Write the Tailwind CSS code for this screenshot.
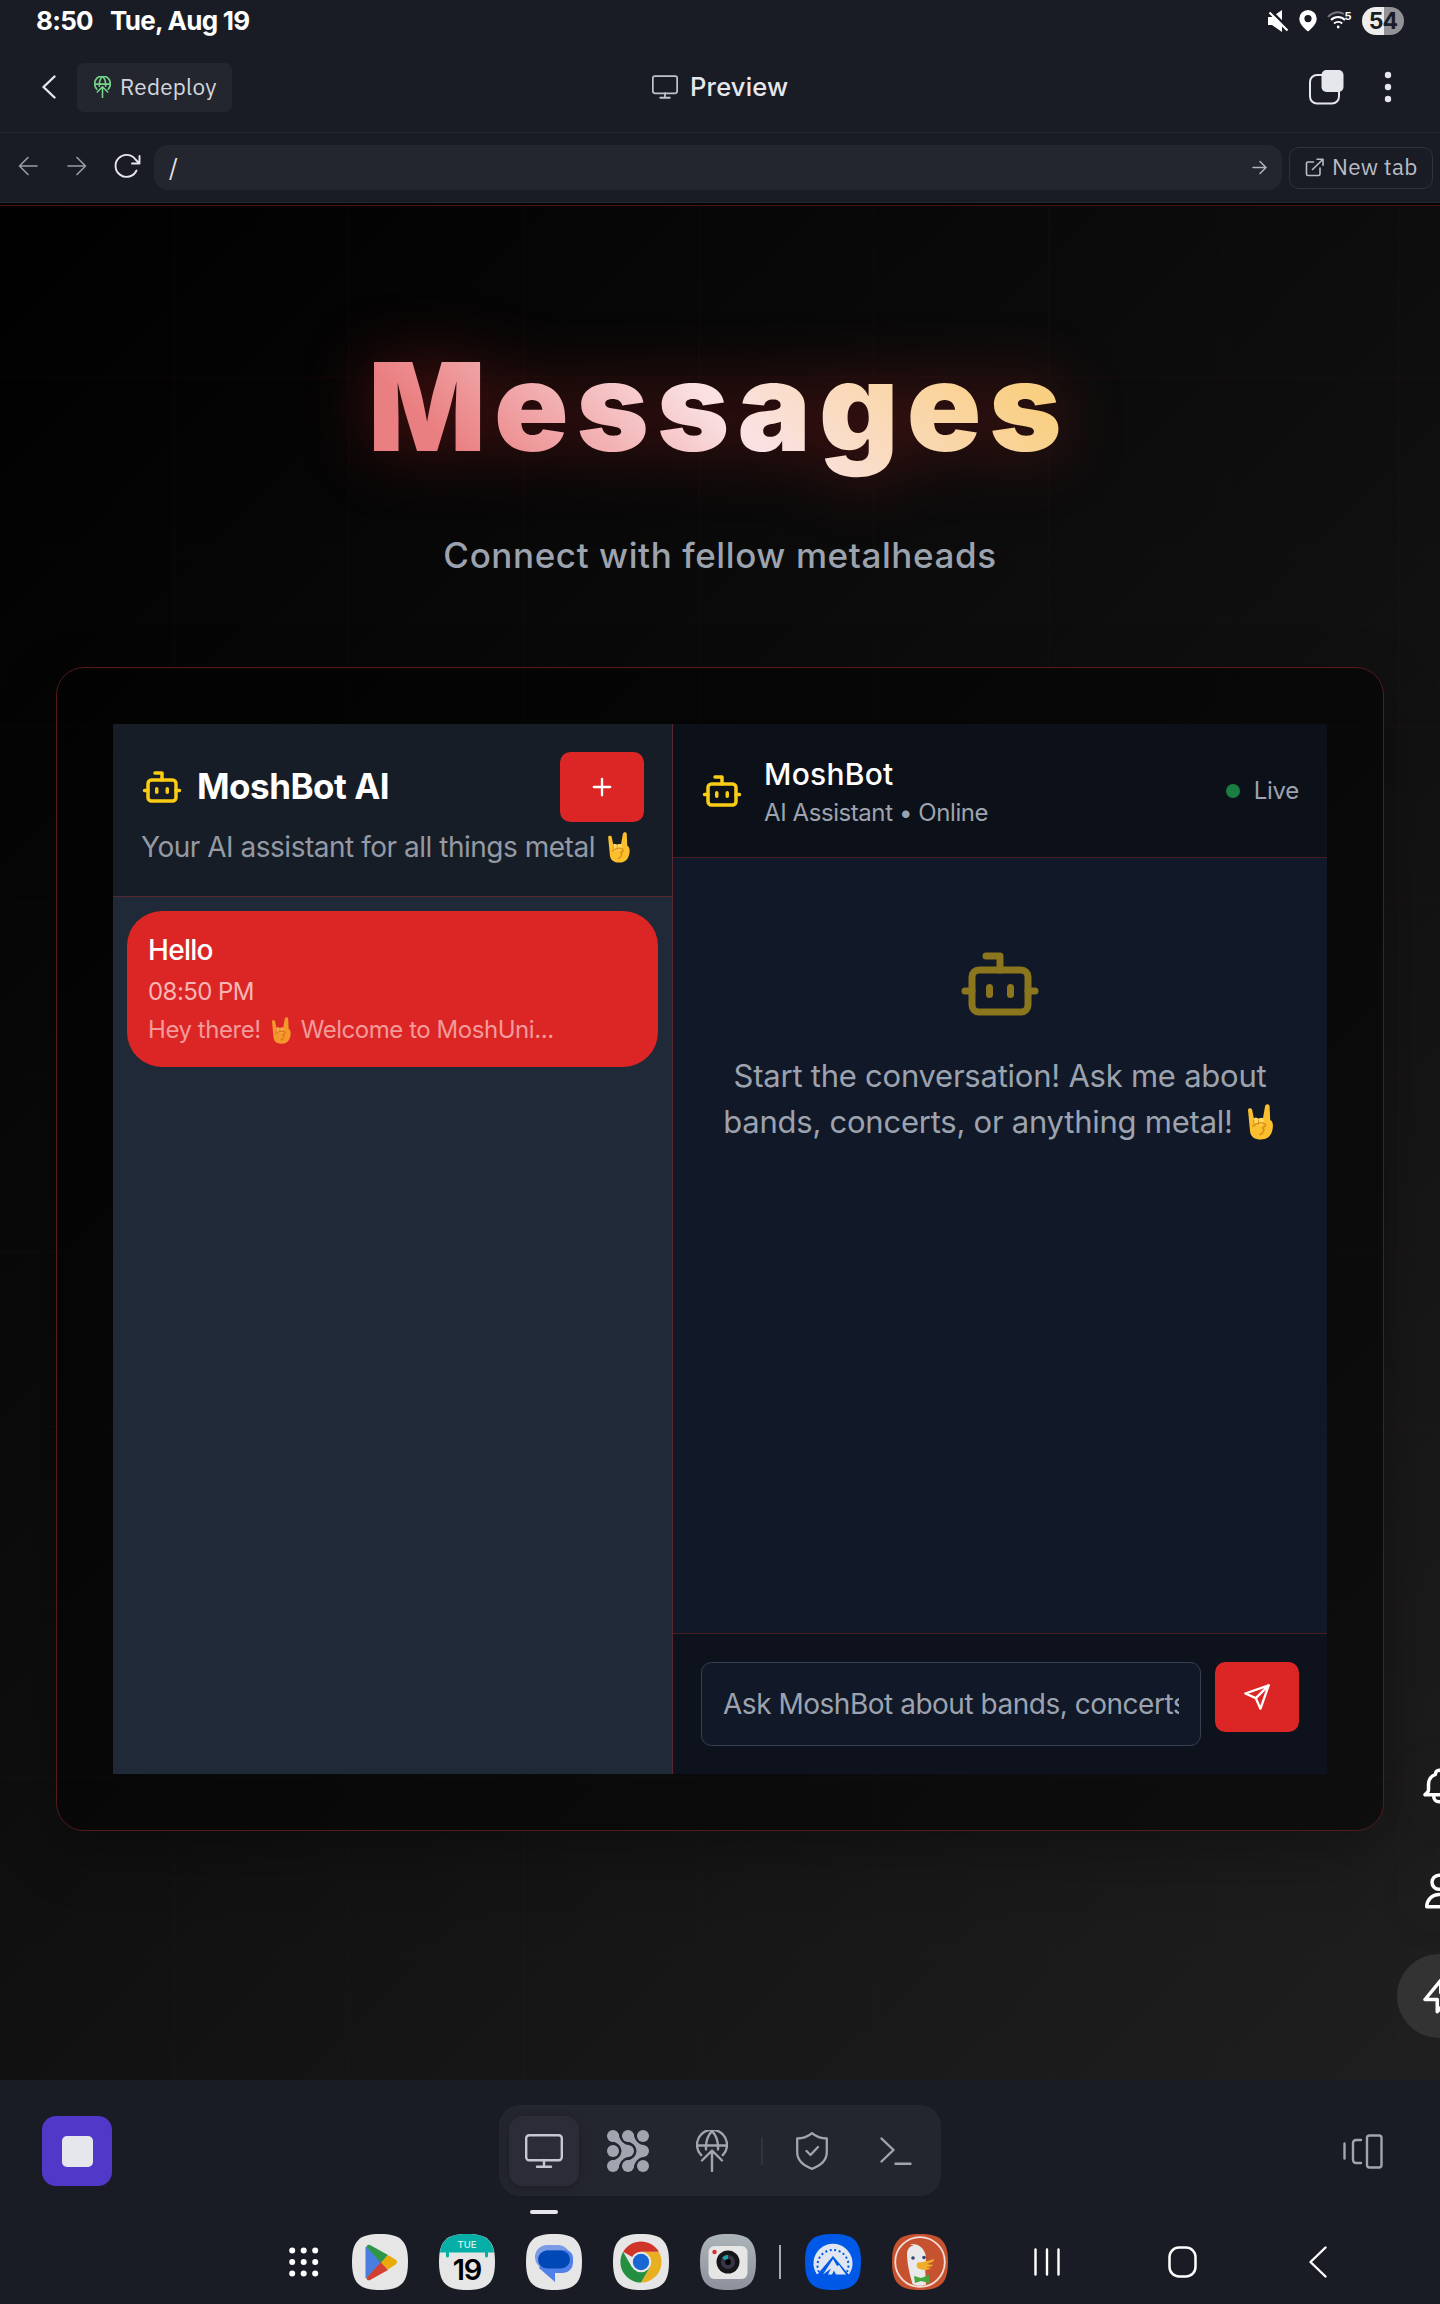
<!DOCTYPE html>
<html lang="en">
<head>
<meta charset="utf-8">
<title>Preview</title>
<script src="https://cdn.jsdelivr.net/npm/@tailwindcss/browser@4"></script>
</head>
<body class="bg-[#1a1c25]">
<svg class="hidden">
  <symbol id="bot" viewBox="0 0 24 24" fill="none" stroke="currentColor" stroke-width="2" stroke-linecap="round" stroke-linejoin="round"><path d="M12 8V4H8"/><rect x="4" y="8" width="16" height="12" rx="2"/><path d="M2 14h2M20 14h2M15 13v2M9 13v2"/></symbol>
  <symbol id="monitor" viewBox="0 0 38 34" fill="none" stroke="currentColor" stroke-linecap="round" stroke-linejoin="round"><rect x="1.200" y="1.200" width="35.600" height="25" rx="3"/><path d="M19 26v6M12 32.700h14"/></symbol>
  <symbol id="deploy" viewBox="0 0 32 42" fill="none" stroke="currentColor" stroke-linecap="round" stroke-linejoin="round"><path d="M5.2 25.2A15 15 0 1 1 26.8 25.2M1.5 15.5h29M10 19.500C9.500 11 12.500 4 16 1.200C19.500 4 22.500 11 22 19.500M16 41V21M6 30.500l10-10 10 10"/></symbol>
  <symbol id="horns" viewBox="0 0 26 36"><path d="M1 6c0-2 3.600-2.400 4.200 0L7 15l9-1 2-11.500c.4-3 4.600-3 4.600 0l.6 13.500c2.600 1 3.200 5 2.400 9-1.200 7-5 10.500-11.500 10.500S3.500 33 3 27Z" fill="#fcbf2d"/><path d="M6.500 16c0-3 4-3.500 5 0 1-3 5-3 5.500 1l-2 4-7 1Z" fill="#ffd75c"/><path d="M6 22c4-3 9-4 12-2 1.500 1.500-.5 3.500-3 3.500 3 1 2 5.500-2 7" fill="none" stroke="#dc8f17" stroke-width="1.600" stroke-linecap="round"/><path d="M11.500 16v5M6.800 16v4" stroke="#dc8f17" stroke-width="1"/></symbol>
</svg>
<div class="w-[1440px] h-[2304px] flex flex-col overflow-hidden font-['Inter',sans-serif] text-[#e6e7ed]">

  <!-- status bar -->
  <div class="h-[42px] flex items-center pl-[36px] pr-[36px] text-white">
    <span class="text-[26px] font-bold leading-[42px] w-[74px] tracking-[-0.7px]">8:50</span>
    <span class="text-[26px] font-bold leading-[42px] tracking-[-0.72px]">Tue, Aug 19</span>
    <svg class="ml-auto w-[20px] h-[22px]" viewBox="0 0 20 22"><path d="M0 7h4l10-7v22L4 15H0Z" fill="#fff"/><path d="M3 1l18 18" stroke="#1a1c25" stroke-width="2.500"/><path d="M1.500 2.500l18 18" stroke="#fff" stroke-width="2.200"/></svg>
    <svg class="ml-[11px] w-[18px] h-[22px]" viewBox="0 0 18 22"><path fill="#fff" fill-rule="evenodd" d="M9 0a8.700 8.700 0 0 1 8.700 8.700C17.700 14 12 19 9 21.500 6 19 .3 14 .3 8.700A8.700 8.700 0 0 1 9 0Zm0 5a3.600 3.600 0 1 0 0 7.200A3.600 3.600 0 0 0 9 5Z"/></svg>
    <svg class="ml-[10px] w-[26px] h-[22px]" viewBox="0 0 26 22" fill="none" stroke="#fff" stroke-width="1.900"><path d="M1 7C5 2 12 1 17 4" opacity=".4"/><path d="M4 10c4-4 10-4 14 0M7 13.500c2.400-2.200 6-2.200 8.200 0"/><circle cx="11.200" cy="17" r="1.400" fill="#fff" stroke="none"/><text x="17.500" y="9.500" font-size="11" font-weight="700" fill="#fff" stroke="none">5</text></svg>
    <div class="ml-[9px] w-[42px] h-[28px] rounded-full bg-linear-to-r from-[#ededed] from-52% to-[#929297] to-52% text-[#1a1c25] text-[23px] leading-[28px] font-bold text-center tracking-[-0.8px]">54</div>
  </div>

  <!-- app header -->
  <div class="h-[91px] flex items-center border-b border-[#252833] relative">
    <svg class="ml-[42px] w-[14px] h-[24px]" viewBox="0 0 14 24" fill="none" stroke="#e6e7ed" stroke-width="2.400" stroke-linecap="round" stroke-linejoin="round"><path d="M12.500 1.500L1.500 12l11 10.500"/></svg>
    <div class="ml-[21px] w-[155px] h-[49px] rounded-[7px] bg-[#24262f] flex items-center pl-[17px]">
      <svg class="w-[17px] h-[22px] text-[#76d68c] [stroke-width:3]"><use href="#deploy"/></svg>
      <span class="ml-[9px] font-['IBM_Plex_Sans','Noto_Sans',sans-serif] text-[22.500px] tracking-[0.25px] text-[#d4d6de] leading-[30px]">Redeploy</span>
    </div>
    <div class="absolute left-[652px] top-[24px] flex items-center h-[42px]">
      <svg class="w-[26px] h-[24px] text-[#c0c3cc] [stroke-width:2.600]"><use href="#monitor"/></svg>
      <span class="ml-[12px] text-[25.500px] font-medium tracking-[0.2px] leading-[36px]">Preview</span>
    </div>
    <svg class="ml-auto mb-[1px] w-[36px] h-[36px]" viewBox="0 0 36 36"><rect x="2" y="6" width="29" height="28.500" rx="7" fill="none" stroke="#e6e7ed" stroke-width="2"/><rect x="13.500" y="1" width="22" height="22" rx="5" fill="#e6e7ed"/></svg>
    <svg class="ml-[40px] mr-[48px] w-[8px] h-[32px]" viewBox="0 0 8 32" fill="#e6e7ed"><circle cx="4" cy="4" r="3.200"/><circle cx="4" cy="16" r="3.200"/><circle cx="4" cy="28" r="3.200"/></svg>
  </div>

  <!-- address bar -->
  <div class="h-[70px] flex items-center border-b border-[#252833]">
    <svg class="ml-[18px] mb-[3px] w-[20px] h-[20px]" viewBox="0 0 20 20" fill="none" stroke="#9a9ca6" stroke-width="1.600" stroke-linecap="round" stroke-linejoin="round"><path d="M19 10H1.500M10 1.500L1.500 10l8.500 8.500"/></svg>
    <svg class="ml-[29px] mb-[3px] w-[20px] h-[20px]" viewBox="0 0 20 20" fill="none" stroke="#9a9ca6" stroke-width="1.600" stroke-linecap="round" stroke-linejoin="round"><path d="M1 10h17.500M10 1.500l8.500 8.500-8.500 8.500"/></svg>
    <svg class="ml-[27px] mb-[3px] w-[28px] h-[26px]" viewBox="0 0 28 26" fill="none" stroke="#e6e7ed" stroke-width="1.900" stroke-linecap="round" stroke-linejoin="round"><path d="M22.500 17.500A11 11 0 1 1 21.500 6.500L25 10M25.500 3v7.500H18"/></svg>
    <div class="ml-[12px] w-[1128px] h-[45px] rounded-[14px] bg-[#24262f] flex items-center pl-[15px] pr-[15px] text-[24px]">
      <span class="font-['IBM_Plex_Sans','Noto_Sans',sans-serif] pb-[2px]">/</span>
      <svg class="ml-auto w-[15px] h-[15px]" viewBox="0 0 15 15" fill="none" stroke="#b0b3bd" stroke-width="1.500" stroke-linecap="round" stroke-linejoin="round"><path d="M1 7.500h13M8 1.500l6 6-6 6"/></svg>
    </div>
    <div class="ml-[7px] w-[144px] h-[42px] rounded-[10px] border border-[#30323e] flex items-center pl-[15px] text-[#b9bcc5]">
      <svg class="w-[19px] h-[19px]" viewBox="0 0 19 19" fill="none" stroke="#b9bcc5" stroke-width="1.600" stroke-linecap="round" stroke-linejoin="round"><path d="M8.500 4H3a1.500 1.500 0 0 0-1.500 1.500V16A1.500 1.500 0 0 0 3 17.500h10.500A1.500 1.500 0 0 0 15 16v-6M12 1.200h6v6M17.500 1.700L7.500 11.500"/></svg>
      <span class="ml-[8px] mb-[1px] font-['IBM_Plex_Sans','Noto_Sans',sans-serif] text-[22.500px] tracking-[0.25px] leading-[30px] whitespace-nowrap">New tab</span>
    </div>
  </div>

  <!-- previewed page -->
  <div class="h-[1877px] shrink-0 relative overflow-hidden bg-[linear-gradient(135deg,#000_0%,#0f0f0f_50%,#1f1f1f_100%)]">
    <div class="absolute inset-0 bg-[repeating-linear-gradient(90deg,transparent_0_173px,rgba(220,38,38,0.025)_173px_175px),repeating-linear-gradient(180deg,transparent_0_173px,rgba(220,38,38,0.025)_173px_175px)]"></div>
    <div class="relative h-full flex flex-col items-center">
      <div class="w-full h-[3px] bg-black border-b border-[#4a1414]"></div>
      <div class="mt-[126px] mr-[2px] drop-shadow-[0_0_34px_rgba(220,38,38,0.36)]">
        <h1 class="text-[123px] leading-[150px] font-black tracking-[8.100px] bg-[linear-gradient(45deg,#ea7f81_14%,#fae2e4_50%,#f9cf82_88%)] bg-clip-text text-transparent">Messages</h1>
      </div>
      <p class="mt-[48px] text-[35px] leading-[50px] font-medium tracking-[0.600px] text-[#9ca3af]">Connect with fellow metalheads</p>

      <div class="mt-[87px] w-[1328px] h-[1164px] rounded-[28px] border border-[#541b1b] bg-black/50 p-[56px] shadow-[0_20px_60px_rgba(0,0,0,0.3)]">
        <div class="w-[1214px] h-[1050px] flex">
          <!-- conversations -->
          <div class="w-[560px] shrink-0 bg-[#202937] border-r border-[#5a2832] flex flex-col">
            <div class="h-[173px] bg-[#171d26] border-b border-[#5a2832] px-[28px] pt-[28px]">
              <div class="flex items-center h-[70px]">
                <svg class="w-[42px] h-[42px] text-[#facc15]"><use href="#bot"/></svg>
                <h2 class="ml-[14px] mb-[2px] text-[35px] font-bold leading-[49px] tracking-[-0.500px] text-white">MoshBot AI</h2>
                <div class="ml-auto w-[84px] h-[70px] rounded-[10.500px] bg-[#dc2626] flex items-center justify-center">
                  <svg class="w-[28px] h-[28px]" viewBox="0 0 24 24" fill="none" stroke="#fff" stroke-width="2" stroke-linecap="round"><path d="M5 12h14M12 5v14"/></svg>
                </div>
              </div>
              <p class="mt-[4px] text-[28px] leading-[42px] tracking-[-0.480px] text-[#949aa5] flex items-center whitespace-nowrap">Your AI assistant for all things metal<svg class="ml-[12px] w-[23px] h-[31px] shrink-0"><use href="#horns"/></svg></p>
            </div>
            <div class="mt-[14px] ml-[14px] w-[531px] h-[156px] rounded-[35px] bg-[#dc2626] px-[21px] pt-[18px]">
              <p class="text-[28px] leading-[43px] font-medium tracking-[-0.700px] text-white">Hello</p>
              <p class="text-[24px] leading-[40px] tracking-[-0.550px] text-[#f7b5b5]">08:50 PM</p>
              <p class="text-[24px] leading-[36px] tracking-[-0.450px] text-[#f39a9a] flex items-center whitespace-nowrap">Hey there!<svg class="mx-[10px] w-[20px] h-[27px] opacity-75"><use href="#horns"/></svg>Welcome to MoshUni...</p>
            </div>
          </div>
          <!-- chat -->
          <div class="w-[654px] bg-[#111827] flex flex-col">
            <div class="h-[134px] bg-[#0c1019] border-b border-[#4a1c24] flex items-center px-[28px]">
              <svg class="w-[42px] h-[42px] text-[#facc15]"><use href="#bot"/></svg>
              <div class="ml-[21px] mt-[2px]">
                <h3 class="text-[30px] leading-[42px] font-medium tracking-[0.250px] text-white">MoshBot</h3>
                <p class="text-[24px] leading-[35px] tracking-[-0.420px] text-[#9ca3af]">AI Assistant • Online</p>
              </div>
              <span class="ml-auto w-[14px] h-[14px] rounded-full bg-[#1a7d41]"></span>
              <span class="ml-[14px] text-[24px] leading-[35px] tracking-[-0.300px] text-[#9ca3af]">Live</span>
            </div>
            <div class="flex-1 flex flex-col items-center pt-[84px] text-[#9ca3af] text-[31px] leading-[46px] tracking-[-0.240px]">
              <svg class="w-[84px] h-[84px] text-[#8b751d]"><use href="#bot"/></svg>
              <p class="mt-[27px] whitespace-nowrap">Start the conversation! Ask me about</p>
              <p class="flex items-center whitespace-nowrap mr-[4px]">bands, concerts, or anything metal!<svg class="ml-[14px] w-[26px] h-[36px]"><use href="#horns"/></svg></p>
            </div>
            <div class="h-[141px] bg-[#0e121c] border-t border-[#4a1c24] px-[28px] pt-[28px] flex items-start justify-between">
              <div class="w-[500px] h-[84px] rounded-[10.500px] border border-[#374151] bg-[#111827] px-[21px]"><div class="overflow-hidden whitespace-nowrap text-[28px] leading-[82px] tracking-[-0.480px] text-[#9ca3af]">Ask MoshBot about bands, concerts</div></div>
              <div class="w-[84px] h-[70px] rounded-[10.500px] bg-[#dc2626] flex items-center justify-center">
                <svg class="w-[28px] h-[28px]" viewBox="0 0 24 24" fill="none" stroke="#fff" stroke-width="2" stroke-linecap="round" stroke-linejoin="round"><path d="m22 2-7 20-4-9-9-4Z"/><path d="M22 2 11 13"/></svg>
              </div>
            </div>
          </div>
        </div>
      </div>
    </div>
    <!-- floating actions, cut by the screen edge -->
    <div class="absolute left-[1397px] top-[1541px] w-[84px] flex flex-col gap-[21px] text-white">
      <div class="h-[84px] flex items-center justify-center rounded-full shadow-[0_7px_20px_rgba(0,0,0,0.06)]"><svg class="w-[42px] h-[42px]" viewBox="0 0 24 24" fill="none" stroke="currentColor" stroke-width="2" stroke-linecap="round" stroke-linejoin="round"><path d="M15 17h5l-1.405-1.405A2.032 2.032 0 0118 14.158V11a6.002 6.002 0 00-4-5.659V5a2 2 0 10-4 0v.341C7.67 6.165 6 8.388 6 11v3.159c0 .538-.214 1.055-.595 1.436L4 17h5m6 0v1a3 3 0 11-6 0v-1m6 0H9"/></svg></div>
      <div class="h-[84px] flex items-center justify-center rounded-full shadow-[0_7px_20px_rgba(0,0,0,0.06)]"><svg class="w-[42px] h-[42px]" viewBox="0 0 24 24" fill="none" stroke="currentColor" stroke-width="2" stroke-linecap="round" stroke-linejoin="round"><path d="M16 7a4 4 0 11-8 0 4 4 0 018 0zM12 14a7 7 0 00-7 7h14a7 7 0 00-7-7z"/></svg></div>
      <div class="h-[84px] flex items-center justify-center rounded-full bg-[#333]"><svg class="w-[42px] h-[42px]" viewBox="0 0 24 24" fill="none" stroke="currentColor" stroke-width="2" stroke-linecap="round" stroke-linejoin="round"><path d="M13 10V3L4 14h7v7l9-11h-7z"/></svg></div>
    </div>
  </div>

  <!-- tool dock -->
  <div class="h-[130px] shrink-0 flex items-start pt-[25px] pl-[42px]">
    <div class="mt-[11px] w-[70px] h-[70px] rounded-[14px] bg-[#5138c9] flex items-center justify-center"><div class="w-[31px] h-[31px] rounded-[5px] bg-[#e6e7ed]"></div></div>
    <div class="ml-[387px] w-[442px] h-[91px] rounded-[21px] bg-[#24262f] flex items-center pl-[10px] text-[#a1a5af]">
      <div class="w-[70px] h-[70px] rounded-[14px] bg-[#2b2c38] shadow-[0_2px_10px_rgba(0,0,0,0.25)] flex items-center justify-center text-[#c6c8d1]"><svg class="w-[38px] h-[34px] [stroke-width:2.400]"><use href="#monitor"/></svg></div>
      <svg class="ml-[28px] w-[42px] h-[42px]" viewBox="0 0 42 42" fill="#a1a5af"><circle cx="6" cy="6" r="6"/><circle cx="21" cy="6" r="6"/><circle cx="36" cy="6" r="6"/><circle cx="6" cy="21" r="6"/><circle cx="21" cy="21" r="6"/><circle cx="36" cy="21" r="6"/><circle cx="6" cy="36" r="6"/><circle cx="21" cy="36" r="6"/><circle cx="36" cy="36" r="6"/><path d="M11.500 3.500C12.500 10 16 14.500 22 15v12C16 27.500 12.500 32 11.500 38.500L4 30.500C10 30 14 27 14.500 21 14 15 10 12 4 11.500Z"/><path d="M26.500 3.500C27.500 10 31 14.500 37 15v12C31 27.500 27.500 32 26.500 38.500L19 30.500C25 30 29 27 29.500 21 29 15 25 12 19 11.500Z"/></svg>
      <svg class="ml-[47px] w-[32px] h-[42px] [stroke-width:2.400]"><use href="#deploy"/></svg>
      <div class="ml-[33px] w-[2px] h-[28px] bg-[#30323e]"></div>
      <svg class="ml-[33px] w-[32px] h-[38px]" viewBox="0 0 32 38" fill="none" stroke="#a1a5af" stroke-width="2.300" stroke-linecap="round" stroke-linejoin="round"><path d="M16 1.200c4 3.500 9 5.300 14.800 5.300V20c0 8-5.800 13.500-14.800 16.800C7 33.500 1.200 28 1.200 20V6.500C7 6.500 12 4.700 16 1.200ZM10.500 19l4 4 7.500-8"/></svg>
      <svg class="ml-[52px] w-[32px] h-[28px]" viewBox="0 0 32 28" fill="none" stroke="#a1a5af" stroke-width="2.400" stroke-linecap="round" stroke-linejoin="round"><path d="M1.500 1.500L13.500 13 1.500 24.500M15.500 26.700H30.500"/></svg>
    </div>
    <svg class="ml-[402px] mt-[29px] w-[40px] h-[36px]" viewBox="0 0 40 36" fill="none" stroke="#a1a5af" stroke-width="2.400" stroke-linecap="round" stroke-linejoin="round"><rect x="24" y="1.500" width="14.500" height="32" rx="2.500"/><path d="M18 6h-5a3 3 0 0 0-3 3v17a3 3 0 0 0 3 3h5M1.500 9.500v15"/></svg>
  </div>

  <!-- system taskbar -->
  <div class="h-[94px] shrink-0 relative flex items-center pl-[289px] pb-[2px]">
    <div class="absolute left-[530px] top-0 w-[28px] h-[4px] rounded-full bg-[#e6e7ed]"></div>
    <svg class="mt-[12px] w-[30px] h-[30px]" viewBox="0 0 30 30" fill="#fff"><circle cx="3.200" cy="3.500" r="3"/><circle cx="14.700" cy="3.500" r="3"/><circle cx="26.200" cy="3.500" r="3"/><circle cx="3.200" cy="15" r="3"/><circle cx="14.700" cy="15" r="3"/><circle cx="26.200" cy="15" r="3"/><circle cx="3.200" cy="26.500" r="3"/><circle cx="14.700" cy="26.500" r="3"/><circle cx="26.200" cy="26.500" r="3"/></svg>
    <svg class="mt-[12px] ml-[32.500px] w-[56px] h-[56px]" viewBox="0 0 56 56"><path fill="#e6e6e6" d="M28 0C49 0 56 7 56 28S49 56 28 56 0 49 0 28 7 0 28 0Z"/><path d="M14 13v31l16-15.500Z" fill="#4a7de0" stroke="#4a7de0"/><path d="M14.500 13c0-2 2-3 4-1.800L36 21l-7 8Z" fill="#2f9648"/><path d="M14.500 44c0 2 2 3 4 1.800L36 36l-7-8Z" fill="#d2402f"/><path d="M36 21l7.500 4.500c2 1.300 2 3.700 0 5L36 35.500 29 28.400Z" fill="#e8ab0a"/></svg>
    <svg class="mt-[12px] ml-[31px] w-[56px] h-[56px]" viewBox="0 0 56 56"><path fill="#e6e6e6" d="M28 0C49 0 56 7 56 28S49 56 28 56 0 49 0 28 7 0 28 0Z"/><path fill="#05aea6" d="M28 0C45 0 53 5 55 18.500H49V22a1 1 0 0 1-3 0V18.500H10V22a1 1 0 0 1-3 0V18.500H1C3 5 11 0 28 0Z"/><text x="28" y="13.800" text-anchor="middle" font-size="9.500" font-weight="500" fill="#d5f2ef">TUE</text><text x="28" y="45.500" text-anchor="middle" font-size="29" font-weight="600" letter-spacing="-1.200" fill="#000">19</text></svg>
    <svg class="mt-[12px] ml-[31px] w-[56px] h-[56px]" viewBox="0 0 56 56"><path fill="#e6e6e6" d="M28 0C49 0 56 7 56 28S49 56 28 56 0 49 0 28 7 0 28 0Z"/><rect x="9" y="11" width="35" height="24" rx="12" fill="#7b9be6"/><path d="M20 16h19a8 8 0 0 1 8 8v5a10 10 0 0 1-10 10h-8v9L13 34Z" fill="#5081e8"/><rect x="12" y="16.500" width="32" height="18" rx="9" fill="#0048b5"/></svg>
    <svg class="mt-[12px] ml-[31px] w-[56px] h-[56px]" viewBox="0 0 56 56"><path fill="#e6e6e6" d="M28 0C49 0 56 7 56 28S49 56 28 56 0 49 0 28 7 0 28 0Z"/><path d="M28 28L10.200 17.700A20.600 20.600 0 0 1 45.800 17.700H28Z" fill="#d03327"/><path d="M28 18H45.900A20.600 20.600 0 0 1 28 48.600L37 33Z" fill="#e8b021"/><path d="M19 33.300L10.100 17.800A20.600 20.600 0 0 0 28 48.600L37 33Z" fill="#248f41"/><circle cx="28" cy="28" r="10.300" fill="#e9e9e9"/><circle cx="28" cy="28" r="8.200" fill="#1967d2"/></svg>
    <svg class="mt-[12px] ml-[31px] w-[56px] h-[56px]" viewBox="0 0 56 56"><defs><linearGradient id="cam" x2="0" y2="1"><stop stop-color="#acb5b9"/><stop offset="1" stop-color="#8c909c"/></linearGradient></defs><path fill="url(#cam)" d="M28 0C49 0 56 7 56 28S49 56 28 56 0 49 0 28 7 0 28 0Z"/><rect x="8.500" y="12" width="39" height="33" rx="6" fill="#e6e6e6"/><circle cx="28" cy="28" r="11.500" fill="#161616"/><circle cx="28" cy="28" r="7" fill="#363648"/><path d="M28 28l-6-4a7 7 0 0 1 6-3Z" fill="#1ba3a8"/><circle cx="28" cy="28" r="3" fill="#000"/><circle cx="14.500" cy="18" r="2.200" fill="#d8302c"/></svg>
    <div class="mt-[12px] ml-[23.500px] w-[2px] h-[34px] bg-[#a9aab0]"></div>
    <svg class="mt-[12px] ml-[24px] w-[56px] h-[56px]" viewBox="0 0 56 56"><path fill="#0059e6" d="M28 0C49 0 56 7 56 28S49 56 28 56 0 49 0 28 7 0 28 0Z"/><path d="M12 40.500A19.500 19.500 0 1 1 44 40.500Z" fill="#dfe6f2"/><path d="M14 38A15.500 15.500 0 1 1 42 38" fill="none" stroke="#0059e6" stroke-width="2" stroke-dasharray="2 2.600"/><path d="M11 42L28 22 45 42Z" fill="#0059e6"/><path d="M18 40.500L28 25l4 7 2-1 7 9.500H31l-2-4-2 4h-4l3-6Z" fill="#dfe6f2"/></svg>
    <svg class="mt-[12px] ml-[31px] w-[56px] h-[56px]" viewBox="0 0 56 56"><path fill="#c75230" d="M28 0C49 0 56 7 56 28S49 56 28 56 0 49 0 28 7 0 28 0Z"/><circle cx="28" cy="28" r="24.800" fill="none" stroke="#f3dfd9" stroke-width="1.800"/><path d="M20.500 50C17 38 15 27 15 20c0-5 3-8 7-8.500l-4-1.200C23 9 30 12 32 17c3 5 2 10 1 16l1 17.500c-4 2-9 1.800-13.500-.5Z" fill="#e9e9e9"/><path d="M26 28.500c4-.2 9-1 16-3.500.5 2-3 4-7 5 2.500.8 5 .8 6 .6-.5 2.400-4 2.600-7 2.400 2 1 4.500.8 5 1.200-4 2.500-9 2-12.500.3-2-1-2.500-5-.5-6Z" fill="#f0ad2a"/><path d="M22 42l7 2 8-3v8l-8-2-6 2Z" fill="#45a63c"/><circle cx="21" cy="24" r="1.800" fill="#2c4a75"/><circle cx="32" cy="23.500" r="1.800" fill="#2c4a75"/></svg>
    <svg class="mt-[12px] ml-[86px] w-[26px] h-[28px]" viewBox="0 0 26 28" stroke="#fff" stroke-width="2.400" stroke-linecap="round"><path d="M1.500 1.500v25M13 1.500v25M24.500 1.500v25"/></svg>
    <svg class="mt-[12px] ml-[108px] w-[29px] h-[32px]" viewBox="0 0 29 32" fill="none" stroke="#fff" stroke-width="2.500"><rect x="1.500" y="1.500" width="26" height="29" rx="9.500"/></svg>
    <svg class="mt-[12px] ml-[112px] w-[18px] h-[32px]" viewBox="0 0 18 32" fill="none" stroke="#fff" stroke-width="2.400" stroke-linecap="round" stroke-linejoin="round"><path d="M16.500 1.500L1.500 16l15 14.500"/></svg>
  </div>
</div>
</body>
</html>
